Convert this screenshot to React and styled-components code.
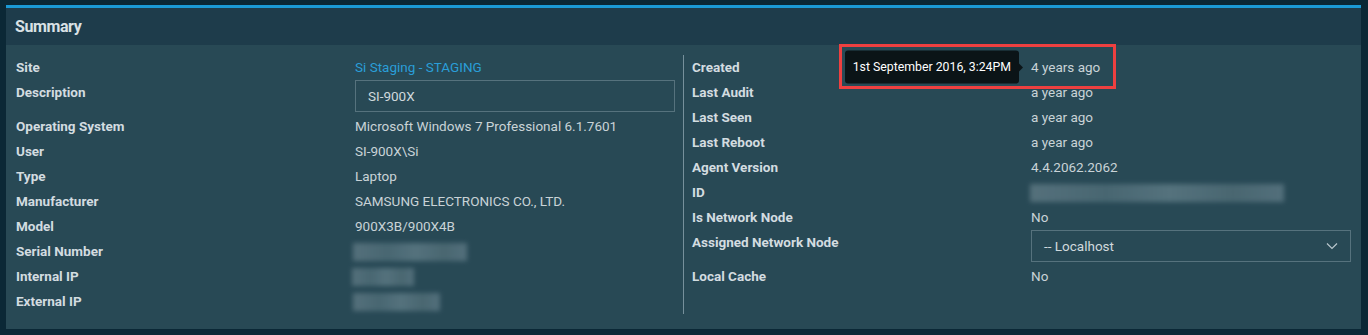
import React from "react";
import styled, { createGlobalStyle } from "styled-components";

const Global = createGlobalStyle`
  html, body { margin: 0; padding: 0; background: #0b2836; }
  body { font-family: Roboto, "Liberation Sans", Arial, sans-serif; }
  * { box-sizing: border-box; }
`;

const Page = styled.div`
  padding: 5px 7px 6px 6px;
  background: #0b2836;
  min-height: 335px;
`;

const Panel = styled.section`
  border-top: 3px solid #1b9ad6;
  background: #284955;
`;

const Header = styled.header`
  height: 37px;
  background: #1e3c4b;
  display: flex;
  align-items: center;
  padding: 0 9px;
  font-size: 16px;
  font-weight: 700;
  color: #d9e1e5;
  letter-spacing: -0.4px;
`;

const Body = styled.div`
  display: flex;
  padding: 10px 10px 15px 10px;
`;

const Column = styled.div`
  flex: 1;
  display: flex;
  flex-direction: column;
  padding-${(p) => (p.$side === "left" ? "right" : "left")}: 8px;
`;

const Divider = styled.div`
  width: 1px;
  background: #8aa2ac;
  opacity: 0.8;
`;

const Row = styled.div`
  display: flex;
  align-items: flex-start;
  min-height: 25px;
  ${(p) => p.$tall && "min-height: 34px;"}
`;

const Label = styled.div`
  width: 339px;
  flex: none;
  line-height: 25px;
  font-size: 13.5px;
  font-weight: 700;
  color: #d3dce0;
`;

const Value = styled.div`
  flex: 1;
  line-height: 25px;
  font-size: 13.5px;
  color: #c9d3d7;
  position: relative;
`;

const Link = styled.a`
  color: #2a9ed8;
  text-decoration: none;
`;

const Field = styled.div`
  height: 32px;
  border: 1px solid #56727d;
  display: flex;
  align-items: center;
  justify-content: space-between;
  padding: 0 12px;
  font-size: 13.5px;
  color: #d0d9dd;
`;

const Blurred = styled.span`
  display: inline-block;
  height: 18px;
  width: ${(p) => p.$w}px;
  margin-left: ${(p) => p.$ml || 0}px;
  vertical-align: middle;
  background: linear-gradient(90deg, #5a7580 0%, #4c6a75 30%, #5a7782 55%, #4d6a74 80%, #587480 100%);
  filter: blur(2.5px);
  opacity: 0.9;
`;

const Anchor = styled.span`
  position: relative;
  display: inline-block;
`;

const Tooltip = styled.div`
  position: absolute;
  right: calc(100% + 12px);
  top: 50%;
  transform: translateY(-50%);
  margin-top: -0.5px;
  height: 33px;
  padding: 0 8px;
  display: flex;
  align-items: center;
  white-space: nowrap;
  background: #0b1417;
  border-radius: 3px;
  color: #ffffff;
  font-size: 12.3px;
  &::after {
    content: "";
    position: absolute;
    right: -4px;
    top: 50%;
    transform: translateY(-50%);
    border-style: solid;
    border-width: 4px 0 4px 4px;
    border-color: transparent transparent transparent #0b1417;
  }
`;

const Highlight = styled.div`
  position: absolute;
  left: -192px;
  top: -11px;
  width: 277px;
  height: 45px;
  border: 3px solid #ee4040;
  pointer-events: none;
`;

const Chevron = () => (
  <svg width="12" height="8" viewBox="0 0 12 8" fill="none">
    <path d="M1 1.5 L6 6.5 L11 1.5" stroke="#b9c7cd" strokeWidth="1.2" />
  </svg>
);

const left = [
  ["Site", <Link href="#">Si Staging - STAGING</Link>],
  ["Description", <Field>SI-900X</Field>, true],
  ["Operating System", "Microsoft Windows 7 Professional 6.1.7601"],
  ["User", "SI-900X\\Si"],
  ["Type", "Laptop"],
  ["Manufacturer", "SAMSUNG ELECTRONICS CO., LTD."],
  ["Model", "900X3B/900X4B"],
  ["Serial Number", <Blurred $w={114} $ml={-2} />],
  ["Internal IP", <Blurred $w={62} $ml={-3} />],
  ["External IP", <Blurred $w={87} $ml={-2} />],
];

const right = [
  [
    "Created",
    <Anchor>
      <Tooltip>1st September 2016, 3:24PM</Tooltip>
      4 years ago
    </Anchor>,
  ],
  ["Last Audit", "a year ago"],
  ["Last Seen", "a year ago"],
  ["Last Reboot", "a year ago"],
  ["Agent Version", "4.4.2062.2062"],
  ["ID", <Blurred $w={254} $ml={-1} />],
  ["Is Network Node", "No"],
  [
    "Assigned Network Node",
    <Field>
      -- Localhost
      <Chevron />
    </Field>,
    true,
  ],
  ["Local Cache", "No"],
];

const Rows = ({ items, highlight }) =>
  items.map(([label, value, tall], i) => (
    <Row key={label} $tall={tall}>
      <Label>{label}</Label>
      <Value>
        {highlight && i === 0 && <Highlight />}
        {value}
      </Value>
    </Row>
  ));

export default function App() {
  return (
    <>
      <Global />
      <Page>
        <Panel>
          <Header>Summary</Header>
          <Body>
            <Column $side="left">
              <Rows items={left} />
            </Column>
            <Divider />
            <Column $side="right">
              <Rows items={right} highlight />
            </Column>
          </Body>
        </Panel>
      </Page>
    </>
  );
}
